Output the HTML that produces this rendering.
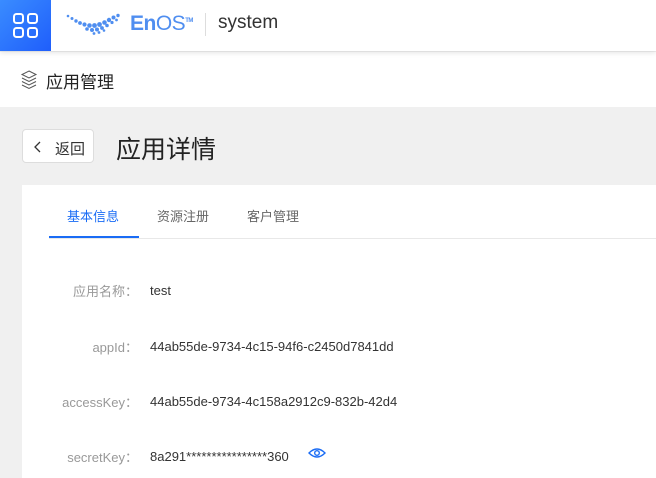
<!DOCTYPE html><html><head><meta charset="utf-8"><style>
body{margin:0;width:656px;height:478px;overflow:hidden;background:#f0f0f0;font-family:"Liberation Sans","Noto Sans CJK SC",sans-serif;position:relative}
.hd{position:absolute;left:0;top:0;width:656px;height:51px;background:#fff;box-shadow:0 2px 5px rgba(0,0,0,.1);z-index:2}
.sq{position:absolute;left:0;top:0;width:51px;height:51px;background:linear-gradient(135deg,#3a8cff,#1f5efb)}
.bc{position:absolute;left:0;top:52px;width:656px;height:55px;background:#fff}
.abs{position:absolute;white-space:nowrap}
.card{position:absolute;left:22px;top:185px;width:634px;height:293px;background:#fff}
.lbl{position:absolute;right:518px;color:#999;font-size:13px;white-space:nowrap}
.val{position:absolute;left:150px;color:#333;font-size:13px;white-space:nowrap}
</style></head><body>
<div class="hd">
<div class="sq"><svg width="51" height="51" viewBox="0 0 51 51"><g fill="none" stroke="#fff" stroke-width="2"><rect x="14" y="14" width="9" height="9" rx="2.5"/><rect x="28" y="14" width="9" height="9" rx="2.5"/><rect x="14" y="28" width="9" height="9" rx="2.5"/><rect x="28" y="28" width="9" height="9" rx="2.5"/></g></svg></div>
<svg class="abs" style="left:66px;top:13px" width="58" height="22" viewBox="0 0 58 22"><g fill="#4f8ef0"><circle cx="2" cy="3" r="1.3"/><circle cx="6" cy="5.5" r="1.5"/><circle cx="10" cy="8" r="1.7"/><circle cx="14" cy="10" r="1.9"/><circle cx="18.5" cy="11.5" r="2.1"/><circle cx="23.5" cy="12.5" r="2.3"/><circle cx="28.5" cy="12.5" r="2.4"/><circle cx="33.5" cy="11.5" r="2.4"/><circle cx="38.5" cy="9.5" r="2.3"/><circle cx="43" cy="7" r="2.2"/><circle cx="47.5" cy="4.5" r="2"/><circle cx="52" cy="2.5" r="1.7"/><circle cx="21" cy="16" r="1.8"/><circle cx="26" cy="17" r="2"/><circle cx="31" cy="16.5" r="2"/><circle cx="36" cy="15" r="1.9"/><circle cx="41" cy="12.5" r="1.8"/><circle cx="46" cy="9.5" r="1.6"/><circle cx="50.5" cy="7" r="1.4"/><circle cx="28" cy="20.5" r="1.4"/><circle cx="33" cy="19.5" r="1.4"/><circle cx="38" cy="17.5" r="1.3"/></g></svg>
<div class="abs" style="left:130px;top:12px;font-size:21px;color:#4f8ef0;font-weight:bold;letter-spacing:-0.5px">En<span style="font-weight:normal">OS</span><sup style="font-size:6px">TM</sup></div>
<div class="abs" style="left:205px;top:13px;width:1px;height:23px;background:#ddd"></div>
<div class="abs" style="left:218px;top:12px;font-size:19px;color:#333">system</div>
</div>
<div class="bc">
<svg class="abs" style="left:19px;top:17px" width="20" height="22" viewBox="0 0 20 22"><g fill="none" stroke="#555" stroke-width="1"><path d="M10 2 L17 5.5 L10 9 L3 5.5 Z"/><path d="M3 9 L10 12.5 L17 9"/><path d="M3 12.5 L10 16 L17 12.5"/><path d="M3 16 L10 19.5 L17 16"/></g></svg>
<div class="abs" style="left:46px;top:16px;font-size:17px;color:#222">应用管理</div>
</div>
<div class="abs" style="left:22px;top:129px;width:72px;height:34px;background:#fff;border:1px solid #ddd;border-radius:4px;box-sizing:border-box"></div>
<svg class="abs" style="left:33px;top:141px" width="10" height="12" viewBox="0 0 10 12"><path d="M7 1 L2 6 L7 11" fill="none" stroke="#333" stroke-width="1.3"/></svg>
<div class="abs" style="left:55px;top:138px;font-size:15px;color:#333">返回</div>
<div class="abs" style="left:116px;top:130px;font-size:25px;color:#222">应用详情</div>
<div class="card">
<div class="abs" style="left:45px;top:21px;font-size:13px;color:#1a6cf5">基本信息</div>
<div class="abs" style="left:135px;top:21px;font-size:13px;color:#666">资源注册</div>
<div class="abs" style="left:225px;top:21px;font-size:13px;color:#666">客户管理</div>
<div class="abs" style="left:27px;top:53px;width:607px;height:1px;background:#e8e8e8"></div>
<div class="abs" style="left:27px;top:51px;width:90px;height:2px;background:#1a6cf5"></div>
</div>
<div class="lbl" style="top:281px">应用名称：</div><div class="val" style="top:283px">test</div>
<div class="lbl" style="top:337px">appId：</div><div class="val" style="top:339px">44ab55de-9734-4c15-94f6-c2450d7841dd</div>
<div class="lbl" style="top:392px">accessKey：</div><div class="val" style="top:394px">44ab55de-9734-4c158a2912c9-832b-42d4</div>
<div class="lbl" style="top:447px">secretKey：</div><div class="val" style="top:449px">8a291****************360</div>
<svg class="abs" style="left:308px;top:447px" width="18" height="12" viewBox="0 0 18 12"><path d="M1 6 Q9 -2 17 6 Q9 14 1 6 Z" fill="none" stroke="#1a6cf5" stroke-width="1.4"/><circle cx="9" cy="6" r="2.3" fill="none" stroke="#1a6cf5" stroke-width="1.4"/></svg>
</body></html>
